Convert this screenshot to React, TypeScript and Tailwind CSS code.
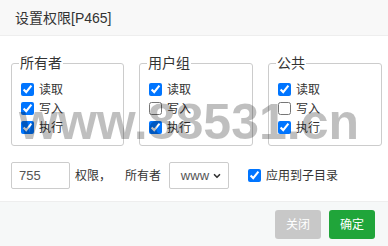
import { ChevronDown } from "lucide-react";

type Perm = { label: string; checked: boolean };

const groups: { title: string; perms: Perm[] }[] = [
  {
    title: "所有者",
    perms: [
      { label: "读取", checked: true },
      { label: "写入", checked: true },
      { label: "执行", checked: true },
    ],
  },
  {
    title: "用户组",
    perms: [
      { label: "读取", checked: true },
      { label: "写入", checked: false },
      { label: "执行", checked: true },
    ],
  },
  {
    title: "公共",
    perms: [
      { label: "读取", checked: true },
      { label: "写入", checked: false },
      { label: "执行", checked: true },
    ],
  },
];

function PermBox({ title, perms, width }: { title: string; perms: Perm[]; width: string }) {
  return (
    <fieldset className={`${width} border border-[#ccc] rounded-[3px] px-[9px] pt-[8px] pb-[8px]`}>
      <legend className="-ml-[2px] px-[1px] text-[14px] leading-[18px] text-[#333]">{title}</legend>
      <div className="flex flex-col">
        {perms.map((p) => (
          <label key={p.label} className="flex items-center h-[19px] text-[12px] text-[#333]">
            <input
              type="checkbox"
              defaultChecked={p.checked}
              className="w-[13px] h-[13px] m-0 mr-[5px]"
            />
            {p.label}
          </label>
        ))}
      </div>
    </fieldset>
  );
}

export default function App() {
  return (
    <div
      className="relative w-[388px] h-[246px] bg-white overflow-hidden flex flex-col"
      style={{ fontFamily: '"Liberation Sans", "Noto Sans CJK SC", sans-serif' }}
    >
      <div className="h-[36px] shrink-0 bg-[#f8f8f8] border-b border-[#eee] pl-[15px] flex items-center text-[14px] text-[#333] leading-none">
        设置权限[P465]
      </div>

      <div className="flex-1 pl-[11px] pt-[18px]">
        <div className="flex gap-[15px]">
          {groups.map((g, i) => (
            <PermBox key={g.title} title={g.title} perms={g.perms} width={i === 0 ? "w-[113px]" : "w-[114px]"} />
          ))}
        </div>

        <div className="mt-[16px] flex items-center h-[27px] text-[12px] text-[#333]">
          <div className="w-[59px] h-[27px] border border-[#ccc] rounded-[2px] pl-[7px] flex items-center text-[13px] text-[#555]">
            755
          </div>
          <span className="ml-[5px]">权限，</span>
          <span className="ml-[14px]">所有者</span>
          <div className="ml-[8px] w-[60px] h-[27px] border border-[#ccc] rounded-[2px] flex items-center justify-end pr-[6px] gap-[3px] text-[13px] text-[#555]">
            <span>www</span>
            <ChevronDown className="w-[10px] h-[10px] text-[#333]" strokeWidth={4} />
          </div>
          <label className="ml-[19px] flex items-center">
            <input type="checkbox" defaultChecked className="w-[13px] h-[13px] m-0 mr-[5px]" />
            应用到子目录
          </label>
        </div>
      </div>

      <div className="h-[45px] shrink-0 bg-[#f6f8f8] border-t border-[#eee] flex justify-end items-start pt-[8px] pr-[13px] gap-2">
        <button className="w-[46px] h-[29px] rounded-[3px] bg-[#c8c8c8] text-white text-[12px]">关闭</button>
        <button className="w-[46px] h-[29px] rounded-[3px] bg-[#20a53a] text-white text-[12px]">确定</button>
      </div>

      <div
        className="absolute left-[19px] top-[97px] text-[50px] leading-[50px] font-bold text-black/25 pointer-events-none whitespace-nowrap"
        style={{ fontFamily: '"Liberation Sans", Arial, sans-serif' }}
      >
        www.88531.cn
      </div>
    </div>
  );
}
